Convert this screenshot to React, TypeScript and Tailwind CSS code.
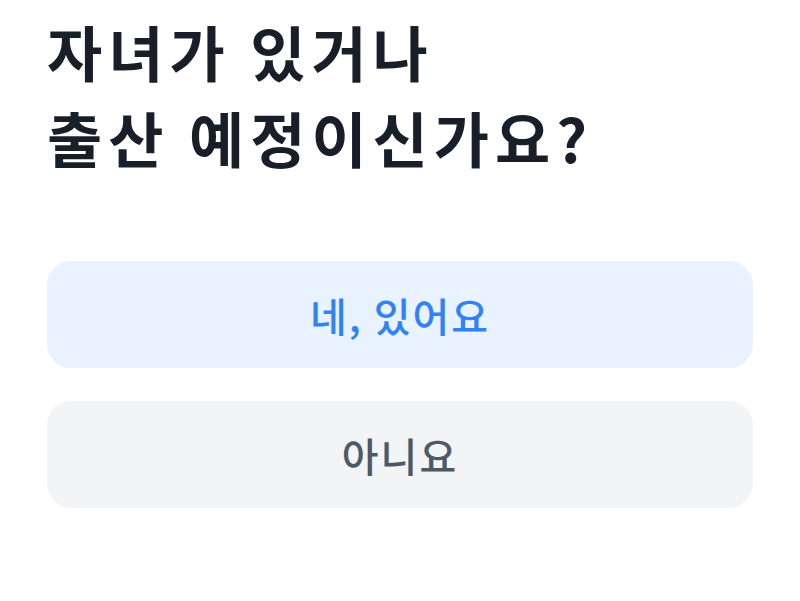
export default function App() {
  return (
    <div
      className="min-h-[601px] w-full bg-white px-[47px] pt-[8px]"
      style={{ fontFamily: '"Noto Sans CJK KR", "Noto Sans", sans-serif' }}
    >
      <h1 className="text-[60px] font-bold leading-[86px] tracking-[6px] text-[#191f28]">
        자녀가 있거나
        <br />
        출산 예정이신가요?
      </h1>

      <div className="mt-[81px] flex flex-col gap-[33px]">
        <button className="flex h-[107px] w-full items-center justify-center rounded-[24px] bg-[#e8f3ff] text-[40px] font-medium tracking-[2px] text-[#3182f6]">
          네, 있어요
        </button>
        <button className="flex h-[107px] w-full items-center justify-center rounded-[24px] bg-[#f2f4f6] text-[40px] font-medium tracking-[2px] text-[#4e5968]">
          아니요
        </button>
      </div>
    </div>
  );
}
